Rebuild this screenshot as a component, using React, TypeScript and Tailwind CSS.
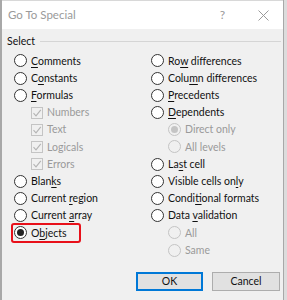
import React from "react";

const font = { fontFamily: 'Lato, "Segoe UI", sans-serif' };

function Label({ text, u }: { text: string; u?: number }) {
  if (u === undefined) return <span>{text}</span>;
  return (
    <span>
      {text.slice(0, u)}
      <span className="underline underline-offset-[2px]">{text[u]}</span>
      {text.slice(u + 1)}
    </span>
  );
}

function Radio({ checked, disabled }: { checked?: boolean; disabled?: boolean }) {
  return (
    <span
      className={
        "flex items-center justify-center w-[13px] h-[13px] rounded-full border shrink-0 " +
        (disabled ? "border-[#c4c4c4] bg-[#f0f0f0]" : "border-[#333] bg-white")
      }
    >
      {checked && (
        <span className={"w-[7px] h-[7px] rounded-full " + (disabled ? "bg-[#c4c4c4]" : "bg-[#222]")} />
      )}
    </span>
  );
}

function Check() {
  return (
    <span className="flex items-center justify-center w-[12px] h-[12px] border border-[#c4c4c4] bg-[#f0f0f0] shrink-0">
      <svg width="10" height="10" viewBox="0 0 10 10">
        <polyline points="1.5,5.2 4,7.8 8.8,1.8" fill="none" stroke="#b4b4b4" strokeWidth="1.1" />
      </svg>
    </span>
  );
}

type Item = { t: string; u?: number; kind: "radio" | "check" | "subradio"; checked?: boolean };

function Row({ item, highlight }: { item: Item; highlight?: boolean }) {
  const disabled = item.kind !== "radio";
  return (
    <div className={"relative flex items-center h-[17.2px] " + (item.kind === "radio" ? "" : "pl-[17px]")}>
      {item.kind === "check" ? <Check /> : <Radio checked={item.checked} disabled={disabled} />}
      <span
        className={
          "ml-[4px] text-[10.5px] leading-none whitespace-nowrap " +
          (disabled ? "text-[#9a9a9a]" : "text-[#111]")
        }
      >
        <Label text={item.t} u={disabled ? undefined : item.u} />
      </span>
      {highlight && (
        <span className="absolute left-[-3px] top-[-1.5px] w-[70px] h-[20px] border-2 border-[#e8101a] rounded-[3px]" />
      )}
    </div>
  );
}

const left: Item[] = [
  { t: "Comments", u: 0, kind: "radio" },
  { t: "Constants", u: 1, kind: "radio" },
  { t: "Formulas", u: 0, kind: "radio" },
  { t: "Numbers", kind: "check" },
  { t: "Text", kind: "check" },
  { t: "Logicals", kind: "check" },
  { t: "Errors", kind: "check" },
  { t: "Blanks", u: 4, kind: "radio" },
  { t: "Current region", u: 8, kind: "radio" },
  { t: "Current array", u: 8, kind: "radio" },
  { t: "Objects", u: 1, kind: "radio", checked: true },
];

const right: Item[] = [
  { t: "Row differences", u: 2, kind: "radio" },
  { t: "Column differences", u: 4, kind: "radio" },
  { t: "Precedents", u: 0, kind: "radio" },
  { t: "Dependents", u: 0, kind: "radio" },
  { t: "Direct only", kind: "subradio", checked: true },
  { t: "All levels", kind: "subradio" },
  { t: "Last cell", u: 2, kind: "radio" },
  { t: "Visible cells only", u: 16, kind: "radio" },
  { t: "Conditional formats", u: 5, kind: "radio" },
  { t: "Data validation", u: 5, kind: "radio" },
  { t: "All", kind: "subradio" },
  { t: "Same", kind: "subradio" },
];

export default function App() {
  return (
    <div className="w-[287px] h-[300px] bg-[#dcdcdc] pr-[3px]" style={font}>
      <div className="flex flex-col h-full border-l-2 border-r border-[#a8a8a8]">
        <div className="h-[29px] shrink-0 bg-white flex items-center pl-[6px] pr-[14px] border-t border-[#d8d8d8]">
          <span className="text-[11.5px] text-[#9a9a9a]">Go To Special</span>
          <span className="ml-auto text-[12px] text-[#9a9a9a] mr-[33px]">?</span>
          <svg width="11" height="11" viewBox="0 0 11 11">
            <path d="M0.5 0.5 L10.5 10.5 M10.5 0.5 L0.5 10.5" stroke="#9a9a9a" strokeWidth="1" />
          </svg>
        </div>
        <div className="flex-1 bg-[#f0f0f0] flex flex-col">
          <div className="flex items-center h-[16px] mt-[4px] pl-[5px] pr-[2px]">
            <span className="text-[10.5px] text-[#111] leading-none">Select</span>
            <span className="flex-1 h-px bg-[#d5d5d5] ml-[5px]" />
          </div>
          <div className="flex mt-[3.4px] pl-[12px]">
            <div className="w-[137px] flex flex-col">
              {left.map((it) => (
                <Row key={it.t} item={it} highlight={it.t === "Objects"} />
              ))}
            </div>
            <div className="flex flex-col">
              {right.map((it) => (
                <Row key={it.t} item={it} />
              ))}
            </div>
          </div>
          <div className="flex justify-end gap-[9px] pr-[3px] mt-auto mb-[9px]">
            <button className="w-[67px] h-[19px] bg-[#e1e1e1] border-2 border-[#0078d7] text-[10.5px] text-[#111] leading-none flex items-center justify-center">
              OK
            </button>
            <button className="w-[68px] h-[19px] bg-[#e1e1e1] border border-[#adadad] text-[10.5px] text-[#111] leading-none flex items-center justify-center">
              Cancel
            </button>
          </div>
        </div>
      </div>
    </div>
  );
}
